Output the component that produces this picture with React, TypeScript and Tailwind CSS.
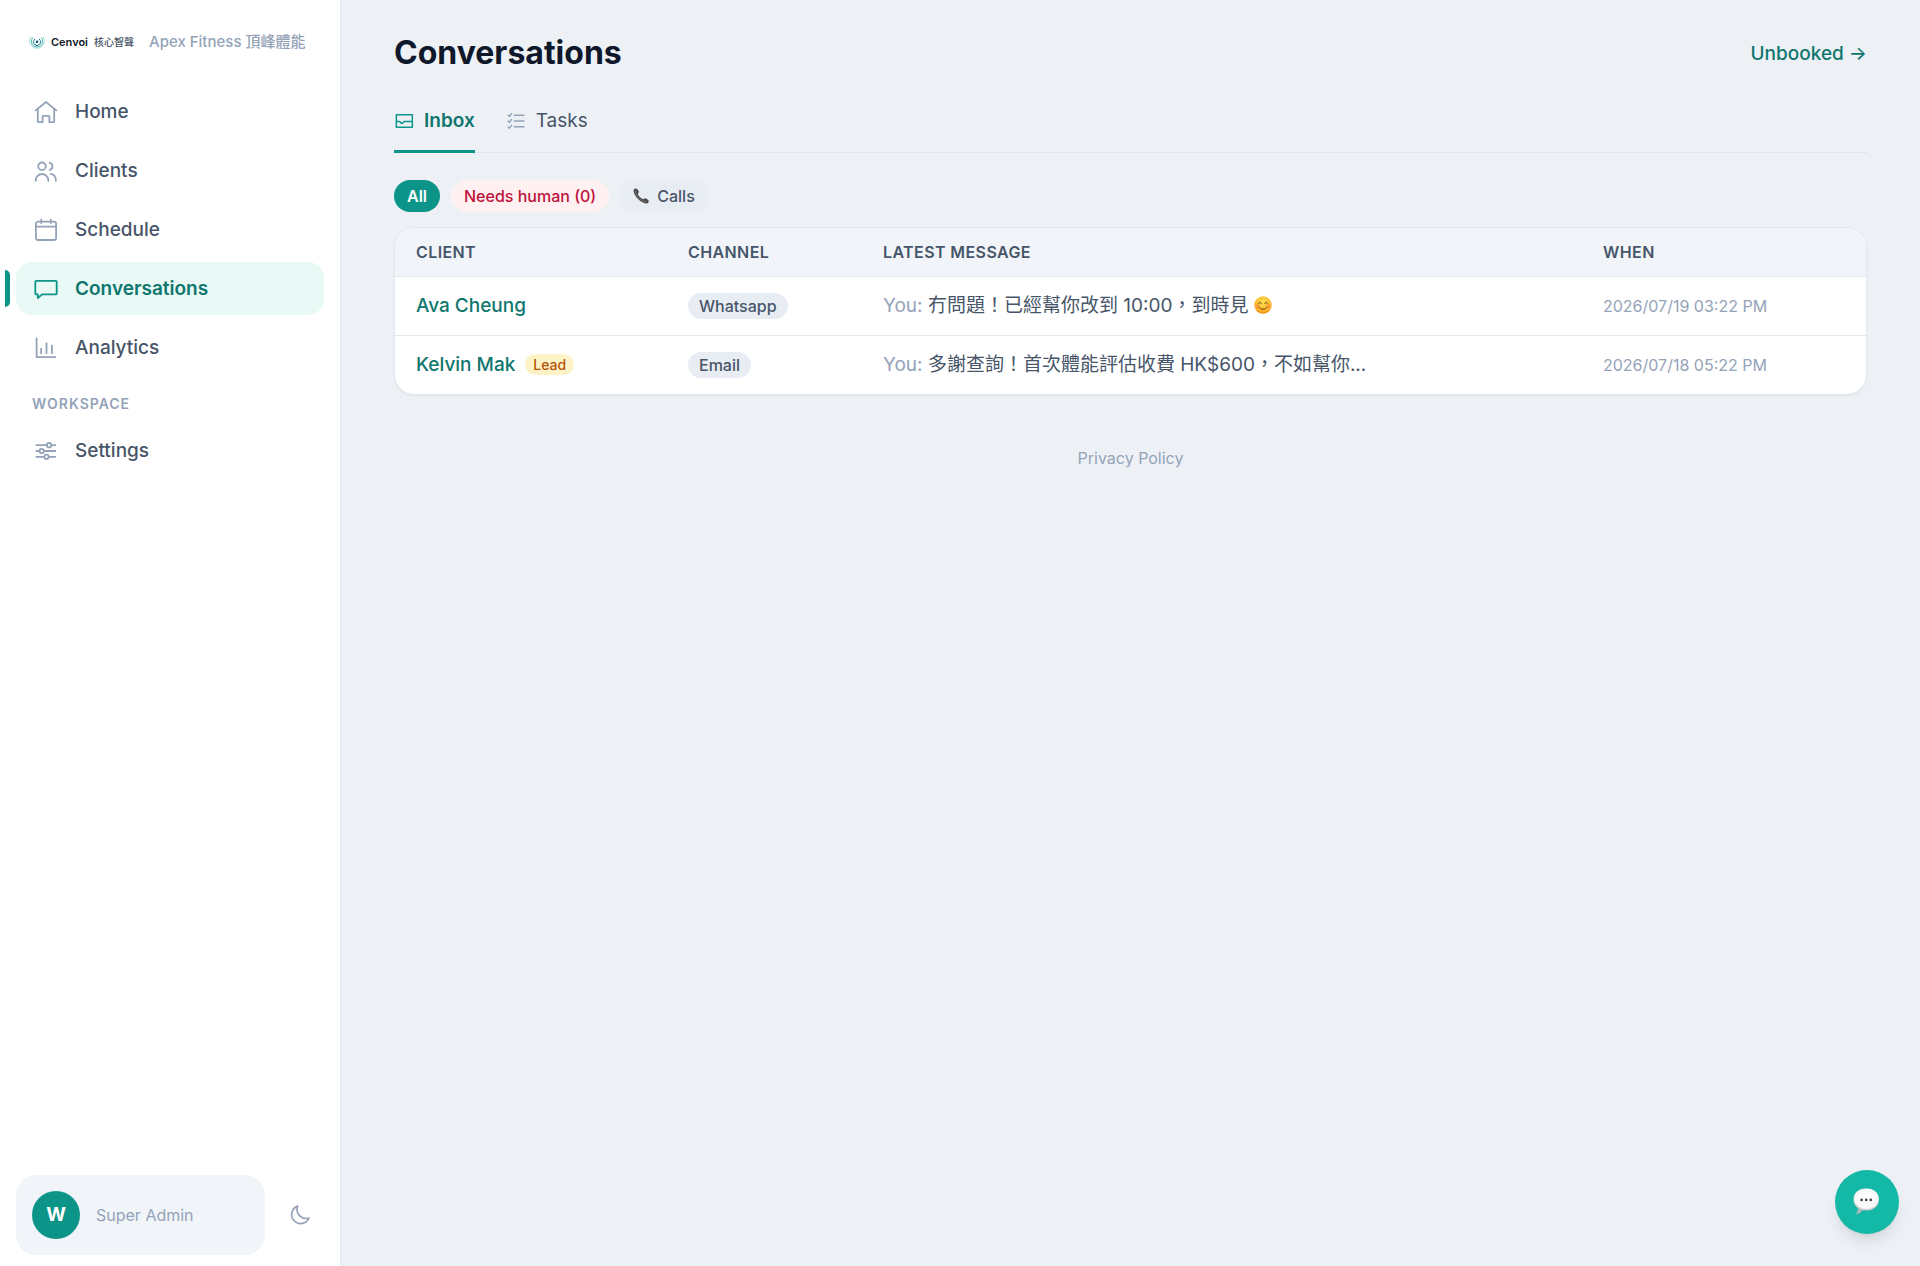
import { useState } from 'react';
import type { ReactNode } from 'react';
import { clsx } from 'clsx';

interface NavItem {
  label: string;
  icon: ReactNode;
}

interface Conversation {
  client: string;
  lead: boolean;
  channel: string;
  message: string;
  smile: boolean;
  when: string;
}

const conversations: Conversation[] = [
  {
    client: 'Ava Cheung',
    lead: false,
    channel: 'Whatsapp',
    message: '冇問題！已經幫你改到 10:00，到時見',
    smile: true,
    when: '2026/07/19 03:22 PM',
  },
  {
    client: 'Kelvin Mak',
    lead: true,
    channel: 'Email',
    message: '多謝查詢！首次體能評估收費 HK$600，不如幫你...',
    smile: false,
    when: '2026/07/18 05:22 PM',
  },
];

function Icon({ children, className = 'size-6' }: { children: ReactNode; className?: string }) {
  return (
    <svg
      className={clsx('shrink-0', className)}
      viewBox="0 0 24 24"
      fill="none"
      stroke="currentColor"
      strokeWidth="1.8"
      strokeLinecap="round"
      strokeLinejoin="round"
      aria-hidden="true"
    >
      {children}
    </svg>
  );
}

const navItems: NavItem[] = [
  {
    label: 'Home',
    icon: (
      <Icon>
        <path d="M1.7 10.4 12 2l10.3 8.4" />
        <path d="M3.8 8.8v12.6c0 .5.3.8.8.8h4v-5.6c0-.5.3-.8.8-.8h5.2c.5 0 .8.3.8.8v5.6h4c.5 0 .8-.3.8-.8V8.8" />
      </Icon>
    ),
  },
  {
    label: 'Clients',
    icon: (
      <Icon>
        <circle cx="8" cy="7.3" r="3.8" />
        <path d="M1.7 21.8v-.5a6.3 6.3 0 0 1 12.6 0v.5" />
        <path d="M15.6 3.6a3.9 3.9 0 0 1 0 7.5M16.8 14.8c3 .5 5 3.2 5 6.5v.5" />
      </Icon>
    ),
  },
  {
    label: 'Schedule',
    icon: (
      <Icon>
        <rect x="1.9" y="3.7" width="20.2" height="18.3" rx="2" />
        <path d="M1.9 8.6h20.2M7.2 1.6v3.4M16.8 1.6v3.4" />
      </Icon>
    ),
  },
  {
    label: 'Conversations',
    icon: (
      <Icon>
        <path d="M2.3 3.8h19.4c.6 0 1 .4 1 1v11.6c0 .6-.4 1-1 1H8.2L3.8 21v-3.6H2.3c-.6 0-1-.4-1-1V4.8c0-.6.4-1 1-1Z" />
      </Icon>
    ),
  },
  {
    label: 'Analytics',
    icon: (
      <Icon>
        <path d="M2.6 2.3v18.8h18.8M7.1 12.6v4.6M12.5 7.2v10M17.9 9.6v7.6" />
      </Icon>
    ),
  },
];

function SettingsIcon() {
  return (
    <Icon>
      <path d="M2.4 6.2h10.4M17.4 6.2h4M2.4 12h3M10 12h11.4M2.4 17.8h7.8M14.8 17.8h6.6" />
      <circle cx="15.1" cy="6.2" r="2.2" />
      <circle cx="7.7" cy="12" r="2.2" />
      <circle cx="12.5" cy="17.8" r="2.2" />
    </Icon>
  );
}

function BrandMark() {
  return (
    <svg className="size-4 shrink-0" viewBox="0 0 16 16" fill="none" strokeLinecap="round" aria-hidden="true">
      <circle cx="8" cy="7.8" r="1.4" fill="#155e75" />
      <path d="M5.6 5.2a3.6 3.6 0 1 0 4.8 0" stroke="#0e7490" strokeWidth="1" />
      <path d="M3.5 3.8a5.7 5.7 0 1 0 9 0" stroke="#2da8a0" strokeWidth=".9" />
      <path d="M1.6 2.8a7.5 7.5 0 1 0 12.8 0" stroke="#8fd6cd" strokeWidth=".8" />
    </svg>
  );
}

function PhoneEmoji() {
  return (
    <svg className="size-4 shrink-0" viewBox="0 0 16 16" aria-hidden="true">
      <path
        d="M.8 1.6C1.7.2 3.5 0 4.2 1l1.6 2.6c.4.9-.7 1.5-1 2.2.7 2.2 2.9 4.5 5.3 5.5.8-.3 1.6-1.5 2.5-1l2.6 1.7c1 .8.6 2.6-1 3.4-1.8.8-5.8-1-8.9-4.1C2 8.1-.1 3.5.8 1.6Z"
        fill="#4b4b4b"
      />
      <path d="M2.3 2.4c-.4 2.3 1.2 5 3.7 7.5s4.9 4.2 7.2 3.9" stroke="#858585" strokeWidth=".7" fill="none" />
    </svg>
  );
}

function SmileEmoji() {
  return (
    <svg className="inline-block size-[18px] align-[-2px]" viewBox="0 0 18 18" role="img" aria-label="Smiling face">
      <defs>
        <radialGradient id="smile-face" cx=".5" cy=".35" r=".65">
          <stop offset="0" stopColor="#ffdf51" />
          <stop offset=".7" stopColor="#fdb92c" />
          <stop offset="1" stopColor="#ee8b13" />
        </radialGradient>
      </defs>
      <circle cx="9" cy="9" r="8.7" fill="url(#smile-face)" />
      <circle cx="3.7" cy="10" r="2" fill="#f6853d" opacity=".6" />
      <circle cx="14.3" cy="10" r="2" fill="#f6853d" opacity=".6" />
      <path
        d="M4.6 7.6c.5-1.8 2.2-1.8 2.7 0M10.7 7.6c.5-1.8 2.2-1.8 2.7 0M5 11.2c1.8 2.8 6.2 2.8 8 0"
        stroke="#6b3d0c"
        strokeWidth="1"
        strokeLinecap="round"
        fill="none"
      />
    </svg>
  );
}

function BubbleEmoji() {
  return (
    <svg className="size-7" viewBox="0 0 28 28" aria-hidden="true">
      <defs>
        <radialGradient id="bubble-fill" cx=".5" cy=".45" r=".58">
          <stop offset="0" stopColor="#fff" />
          <stop offset=".78" stopColor="#f8f8f8" />
          <stop offset="1" stopColor="#a9a9a9" />
        </radialGradient>
      </defs>
      <path d="M5 18c.6 3-.6 6-2 8.500 3.200-.7 6.400-3 7.600-6Z" fill="#b3b9b8" />
      <rect x=".5" y=".5" width="25.500" height="22" rx="12" ry="10.500" fill="url(#bubble-fill)" />
      <g fill="#3f3f3f">
        <circle cx="8.600" cy="11.900" r="1.300" />
        <circle cx="13.200" cy="11.900" r="1.300" />
        <circle cx="17.800" cy="11.900" r="1.300" />
      </g>
    </svg>
  );
}

function NavLink({ item, active }: { item: NavItem; active: boolean }) {
  return (
    <a
      href="#"
      aria-current={active ? 'page' : undefined}
      className={clsx(
        'relative flex h-[53px] items-center gap-[17px] rounded-2xl px-[18px] text-[19px] leading-[29px]',
        active ? 'bg-[#e8f9f6] font-semibold text-[#0f766e]' : 'font-medium text-[#475569]',
      )}
    >
      {active && <span className="absolute top-2 -left-[11px] h-[37px] w-[5px] rounded-r-full bg-[#0d9488]" />}
      <span className={active ? 'text-[#0d9488]' : 'text-[#94a3b8]'}>{item.icon}</span>
      {item.label}
    </a>
  );
}

function Sidebar() {
  return (
    <aside className="sticky top-0 flex h-screen w-[341px] shrink-0 flex-col border-r border-[#e2e8f0] bg-white px-4 pt-7 pb-[11px]">
      <div className="flex h-7 items-center pl-[13px] whitespace-nowrap">
        <a href="#" className="flex items-center">
          <BrandMark />
          <span className="ml-1.5 text-[11px] font-semibold text-[#0f172a]">Cenvoi</span>
          <span className="ml-1.5 text-[10px] font-medium text-[#475569]">核心智聲</span>
        </a>
        <span className="ml-[15px] text-[15px] font-medium text-[#94a3b8]">Apex Fitness 頂峰體能</span>
      </div>

      <nav className="mt-[29px] flex flex-col gap-1.5" aria-label="Main">
        {navItems.map((item) => (
          <NavLink key={item.label} item={item} active={item.label === 'Conversations'} />
        ))}
        <h2 className="mt-3.5 mb-1 px-4 text-sm font-semibold tracking-[1px] text-[#94a3b8]">WORKSPACE</h2>
        <NavLink item={{ label: 'Settings', icon: <SettingsIcon /> }} active={false} />
      </nav>

      <div className="mt-auto flex items-center gap-[11px]">
        <div className="flex h-20 w-[250px] items-center gap-4 rounded-[20px] bg-[#f1f5f9] px-4">
          <span className="flex size-12 items-center justify-center rounded-full bg-[#0d9488] text-[19px] font-bold text-white">
            W
          </span>
          <span className="text-base text-[#94a3b8]">Super Admin</span>
        </div>
        <button type="button" aria-label="Dark mode" className="flex size-12 items-center justify-center text-[#94a3b8]">
          <Icon className="size-[22px]">
            <path d="M9.5 2.3A9.8 9.8 0 1 0 21.8 15.2 9.8 9.8 0 0 1 9.5 2.3Z" />
          </Icon>
        </button>
      </div>
    </aside>
  );
}

const tabClass = '-mb-px flex h-14 items-center gap-2.5 border-b-[3px] pb-1.5 text-[19px] leading-[29px]';

function Tabs() {
  const [tab, setTab] = useState('Inbox');

  return (
    <div className="mt-[23px] flex gap-[31px] border-b border-[#dfe5ec]" role="tablist">
      <button
        type="button"
        role="tab"
        aria-selected={tab === 'Inbox'}
        onClick={() => setTab('Inbox')}
        className={clsx(
          tabClass,
          tab === 'Inbox' ? 'border-[#0d9488] font-semibold text-[#0f766e]' : 'border-transparent text-[#475569]',
        )}
      >
        <Icon className={clsx('size-5', tab === 'Inbox' ? 'text-[#0d9488]' : 'text-[#94a3b8]')}>
          <path d="M2.8 4.4h19.2v15H2.8ZM2.8 12.6h3.6c1.4 0 1.6 2.4 3 2.4 1.2 0 1.6-2.4 3.200-2.400h9.400" />
        </Icon>
        Inbox
      </button>
      <button
        type="button"
        role="tab"
        aria-selected={tab === 'Tasks'}
        onClick={() => setTab('Tasks')}
        className={clsx(
          tabClass,
          tab === 'Tasks' ? 'border-[#0d9488] font-semibold text-[#0f766e]' : 'border-transparent text-[#475569]',
        )}
      >
        <Icon className={clsx('size-5', tab === 'Tasks' ? 'text-[#0d9488]' : 'text-[#94a3b8]')}>
          <path d="M10 5h11.500M10 12h11.500M10 19h11.500" />
          <path d="m2.600 5.200 1.400 1.400L6.600 3.200M2.600 12.200 4 13.600l2.600-3.400M2.600 19.200 4 20.600l2.600-3.400" />
        </Icon>
        Tasks
      </button>
    </div>
  );
}

function ConversationTable() {
  return (
    <div className="mt-[15px] overflow-hidden rounded-[20px] border border-[#e2e8f0] bg-white shadow-xs">
      <table className="w-full table-fixed border-collapse text-left">
        <thead className="bg-[#f1f5f9]">
          <tr className="h-12 text-base tracking-wide text-[#475569]">
            <th scope="col" className="w-[272px] px-[21px] font-semibold">CLIENT</th>
            <th scope="col" className="w-[195px] px-[21px] font-semibold">CHANNEL</th>
            <th scope="col" className="px-[21px] font-semibold">LATEST MESSAGE</th>
            <th scope="col" className="w-[284px] px-[21px] font-semibold">WHEN</th>
          </tr>
        </thead>
        <tbody>
          {conversations.map((row) => (
            <tr key={row.client} className="h-[59px] border-t border-[#e2e8f0]">
              <td className="px-[21px]">
                <div className="flex items-center gap-2.5">
                  <a href="#" className="text-[19px] leading-[29px] font-medium text-[#0f766e]">{row.client}</a>
                  {row.lead && (
                    <span className="rounded-full bg-[#fef3c7] px-2 text-sm leading-[21px] font-medium text-[#b45309]">
                      Lead
                    </span>
                  )}
                </div>
              </td>
              <td className="px-[21px]">
                <span className="inline-block rounded-full bg-[#e8edf4] px-[11px] text-base leading-[26px] font-medium text-[#475569]">
                  {row.channel}
                </span>
              </td>
              <td className="truncate px-[21px] text-[19px] leading-[29px] text-[#475569]">
                <span className="text-[#94a3b8]">You:</span> {row.message} {row.smile && <SmileEmoji />}
              </td>
              <td className="px-[21px] text-base whitespace-nowrap text-[#94a3b8]">{row.when}</td>
            </tr>
          ))}
        </tbody>
      </table>
    </div>
  );
}

export default function App() {
  return (
    <div className="flex min-h-screen bg-[#edf1f6] font-['Inter','Noto_Sans_CJK_TC',sans-serif]">
      <Sidebar />

      <main className="min-w-0 flex-1 px-[53px] pt-8">
        <header className="flex items-center justify-between">
          <h1 className="text-[32px] leading-[42px] font-bold text-[#0f172a]">Conversations</h1>
          <a href="#" className="text-[19px] leading-[29px] font-medium text-[#0f766e]">Unbooked →</a>
        </header>

        <Tabs />

        <div className="mt-[27px] flex items-center gap-[11px] text-base leading-8 font-medium">
          <button type="button" className="rounded-full bg-[#0d9488] px-[13px] font-semibold text-white">All</button>
          <button type="button" className="rounded-full bg-[#fff0f1] px-[13px] text-[#be123c]">Needs human (0)</button>
          <button type="button" className="flex items-center gap-2 rounded-full bg-[#e8edf4] px-[13px] text-[#475569]">
            <PhoneEmoji />
            Calls
          </button>
        </div>

        <ConversationTable />

        <footer className="mt-[51px] text-center text-base text-[#94a3b8]">
          <a href="#">Privacy Policy</a>
        </footer>
      </main>

      <button
        type="button"
        aria-label="Open chat"
        className="fixed right-[21px] bottom-8 flex size-16 items-center justify-center rounded-full bg-[#14b8a6] shadow-lg"
      >
        <BubbleEmoji />
      </button>
    </div>
  );
}
